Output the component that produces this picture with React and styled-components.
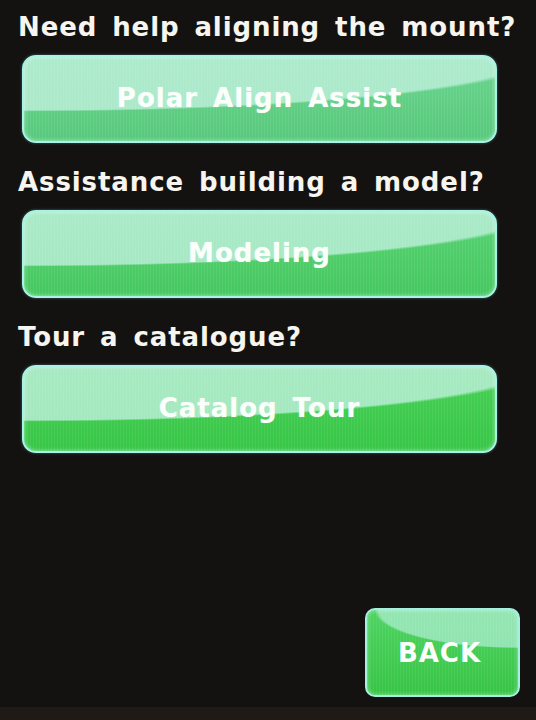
import React from "react";
import styled, { createGlobalStyle } from "styled-components";

const Global = createGlobalStyle`
  html, body { margin: 0; padding: 0; background: #1f1a15; }
  body { width: 536px; height: 720px; overflow: hidden; }
`;

const Screen = styled.div`
  box-sizing: border-box;
  width: 536px;
  height: 707px;
  background: #141210;
  padding: 12px 0 10px 0;
  display: flex;
  flex-direction: column;
  font-family: "DejaVu Sans", Verdana, sans-serif;
`;

const Section = styled.section`
  display: flex;
  flex-direction: column;
  gap: 13px;
  margin-bottom: 24px;
`;

const Heading = styled.h2`
  margin: 0;
  padding-left: 18px;
  font-size: 26px;
  line-height: 30px;
  font-weight: 700;
  letter-spacing: 0.9px;
  word-spacing: 5px;
  color: #f6f5ef;
  white-space: nowrap;
`;

const tones = {
  pale: ["#6ad58e", "#58c97c"],
  mid: ["#58d373", "#46c760"],
  deep: ["#47d156", "#38c647"],
};

const GlossButton = styled.button`
  box-sizing: border-box;
  margin-left: 22px;
  width: 475px;
  height: 88px;
  border: 2px solid #a8f3e6;
  border-radius: 14px;
  background:
    repeating-linear-gradient(90deg, rgba(255,255,255,0.07) 0 1px, transparent 1px 3px),
    radial-gradient(ellipse 110% 65% at 0% 0%, rgba(190, 240, 220, 0.8) 0 97%, transparent 100%),
    linear-gradient(180deg, ${(p) => tones[p.$tone][0]}, ${(p) => tones[p.$tone][1]});
  box-shadow: inset 0 0 4px rgba(230, 255, 250, 0.6), 0 0 3px rgba(120, 230, 220, 0.4);
  color: #fbfffb;
  font-family: "DejaVu Sans", Verdana, sans-serif;
  font-weight: 700;
  font-size: 26px;
  letter-spacing: 1px;
  word-spacing: 5px;
  display: flex;
  align-items: center;
  justify-content: center;
  padding: 0 0 2px 0;
  text-shadow: 0 0 1px rgba(255,255,255,0.5);
`;

const Spacer = styled.div`
  flex: 1;
`;

const Footer = styled.div`
  display: flex;
  justify-content: flex-end;
  padding-right: 16px;
`;

const BackButton = styled.button`
  box-sizing: border-box;
  width: 155px;
  height: 89px;
  border: 2px solid #a3efe0;
  border-radius: 10px;
  background:
    repeating-linear-gradient(90deg, rgba(255,255,255,0.07) 0 1px, transparent 1px 3px),
    radial-gradient(ellipse 95% 45% at 100% 0%, rgba(170, 236, 205, 0.75) 0 97%, transparent 100%),
    linear-gradient(180deg, #4fd362, #37c545);
  box-shadow: inset 0 0 4px rgba(230, 255, 250, 0.55);
  color: #fbfffb;
  font-family: "DejaVu Sans", Verdana, sans-serif;
  font-weight: 700;
  font-size: 26px;
  letter-spacing: 1px;
  display: flex;
  align-items: center;
  justify-content: center;
  padding: 0 6px 0 0;
`;

const items = [
  { q: "Need help aligning the mount?", label: "Polar Align Assist", tone: "pale" },
  { q: "Assistance building a model?", label: "Modeling", tone: "mid" },
  { q: "Tour a catalogue?", label: "Catalog Tour", tone: "deep" },
];

export default function App() {
  return (
    <>
      <Global />
      <Screen>
        {items.map((it) => (
          <Section key={it.q}>
            <Heading>{it.q}</Heading>
            <GlossButton $tone={it.tone}>{it.label}</GlossButton>
          </Section>
        ))}
        <Spacer />
        <Footer>
          <BackButton>BACK</BackButton>
        </Footer>
      </Screen>
    </>
  );
}
